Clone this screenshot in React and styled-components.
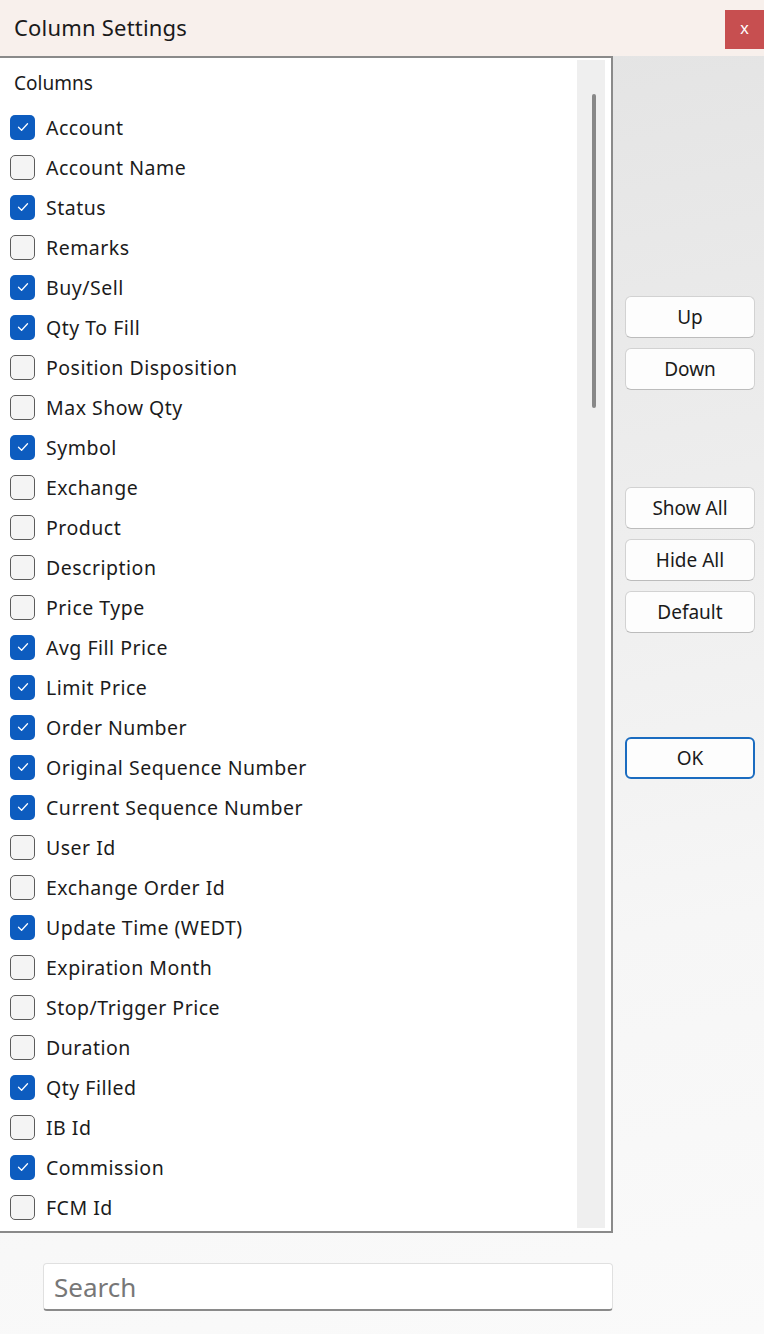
import React from 'react';
import styled, { createGlobalStyle } from 'styled-components';

const GlobalStyle = createGlobalStyle`
  html, body { margin: 0; padding: 0; }
  body {
    font-family: 'Noto Sans', 'Open Sans', sans-serif;
    color: #1b1b1b;
  }
`;

const Window = styled.div`
  display: flex;
  flex-direction: column;
  width: 764px;
  height: 1334px;
  overflow: hidden;
`;

const TitleBar = styled.div`
  display: flex;
  align-items: center;
  justify-content: space-between;
  height: 56px;
  flex-shrink: 0;
  background: #f8f0ec;
  padding-left: 14px;
`;

const Title = styled.div`
  font-size: 22px;
  letter-spacing: 0.2px;
  color: #1a1a1a;
  margin-top: -2px;
`;

const CloseBtn = styled.div`
  width: 39px;
  height: 39px;
  margin-top: 2px;
  background: #c74f50;
  color: #fff;
  display: flex;
  align-items: center;
  justify-content: center;
  font-size: 17px;
  font-family: 'Liberation Sans', sans-serif;
`;

const Body = styled.div`
  flex: 1;
  display: flex;
  background: linear-gradient(170deg, #e2e2e2 0%, #ececec 35%, #f6f6f6 70%, #fafafa 100%);
`;

const LeftCol = styled.div`
  width: 613px;
  display: flex;
  flex-direction: column;
`;

const ListPanel = styled.div`
  height: 1177px;
  box-sizing: border-box;
  border: 2px solid #8a8a8a;
  border-left: none;
  background: #fff;
  display: flex;
`;

const List = styled.div`
  flex: 1;
  padding-top: 13px;
`;

const Header = styled.div`
  height: 36px;
  line-height: 24px;
  padding-left: 14px;
  font-size: 19px;
`;

const Row = styled.div`
  height: 40px;
  display: flex;
  align-items: center;
  padding-left: 10px;
  gap: 11px;
  font-size: 19.5px;
  letter-spacing: 0.5px;
`;

const Box = styled.div`
  width: 25px;
  height: 25px;
  box-sizing: border-box;
  border-radius: 5px;
  display: flex;
  align-items: center;
  justify-content: center;
  background: ${(p) => (p.$on ? '#0d5cbf' : '#f4f4f4')};
  border: ${(p) => (p.$on ? 'none' : '1.5px solid #5c5c5c')};
`;

const Track = styled.div`
  width: 28px;
  margin: 2px 6px 3px 0;
  background: #efefef;
  position: relative;
`;

const Thumb = styled.div`
  position: absolute;
  left: 15px;
  top: 34px;
  width: 4px;
  height: 314px;
  border-radius: 2px;
  background: #888;
`;

const SearchBox = styled.div`
  margin: 30px 0 0 43px;
  width: 570px;
  height: 48px;
  box-sizing: border-box;
  background: #fff;
  border: 1px solid #e0e0e0;
  border-bottom: 2px solid #8a8a8a;
  border-radius: 4px;
  display: flex;
  align-items: center;
  padding-left: 10px;
  font-size: 26px;
  color: #777;
`;

const SideCol = styled.div`
  display: flex;
  flex-direction: column;
  padding-left: 12px;
  padding-top: 240px;
`;

const Button = styled.div`
  width: 130px;
  height: 42px;
  box-sizing: border-box;
  margin-top: ${(p) => p.$gap || 0}px;
  border-radius: 6px;
  background: #fdfdfd;
  border: ${(p) => (p.$primary ? '2px solid #1b6cc0' : '1px solid #d2d2d2')};
  border-bottom-color: ${(p) => (p.$primary ? '#1b6cc0' : '#bcbcbc')};
  display: flex;
  align-items: center;
  justify-content: center;
  font-size: 19px;
  color: #1a1a1a;
`;

const columns = [
  ['Account', true],
  ['Account Name', false],
  ['Status', true],
  ['Remarks', false],
  ['Buy/Sell', true],
  ['Qty To Fill', true],
  ['Position Disposition', false],
  ['Max Show Qty', false],
  ['Symbol', true],
  ['Exchange', false],
  ['Product', false],
  ['Description', false],
  ['Price Type', false],
  ['Avg Fill Price', true],
  ['Limit Price', true],
  ['Order Number', true],
  ['Original Sequence Number', true],
  ['Current Sequence Number', true],
  ['User Id', false],
  ['Exchange Order Id', false],
  ['Update Time (WEDT)', true],
  ['Expiration Month', false],
  ['Stop/Trigger Price', false],
  ['Duration', false],
  ['Qty Filled', true],
  ['IB Id', false],
  ['Commission', true],
  ['FCM Id', false],
];

const Check = () => (
  <svg width="14" height="14" viewBox="0 0 14 14">
    <path d="M2.5 7.3 L5.6 10.2 L11.5 3.8" fill="none" stroke="#fff" strokeWidth="1.3" strokeLinecap="round" strokeLinejoin="round" />
  </svg>
);

export default function App() {
  return (
    <Window>
      <GlobalStyle />
      <TitleBar>
        <Title>Column Settings</Title>
        <CloseBtn>x</CloseBtn>
      </TitleBar>
      <Body>
        <LeftCol>
          <ListPanel>
            <List>
              <Header>Columns</Header>
              {columns.map(([name, on]) => (
                <Row key={name}>
                  <Box $on={on}>{on && <Check />}</Box>
                  {name}
                </Row>
              ))}
            </List>
            <Track>
              <Thumb />
            </Track>
          </ListPanel>
          <SearchBox>Search</SearchBox>
        </LeftCol>
        <SideCol>
          <Button>Up</Button>
          <Button $gap={10}>Down</Button>
          <Button $gap={97}>Show All</Button>
          <Button $gap={10}>Hide All</Button>
          <Button $gap={10}>Default</Button>
          <Button $gap={104} $primary>OK</Button>
        </SideCol>
      </Body>
    </Window>
  );
}
